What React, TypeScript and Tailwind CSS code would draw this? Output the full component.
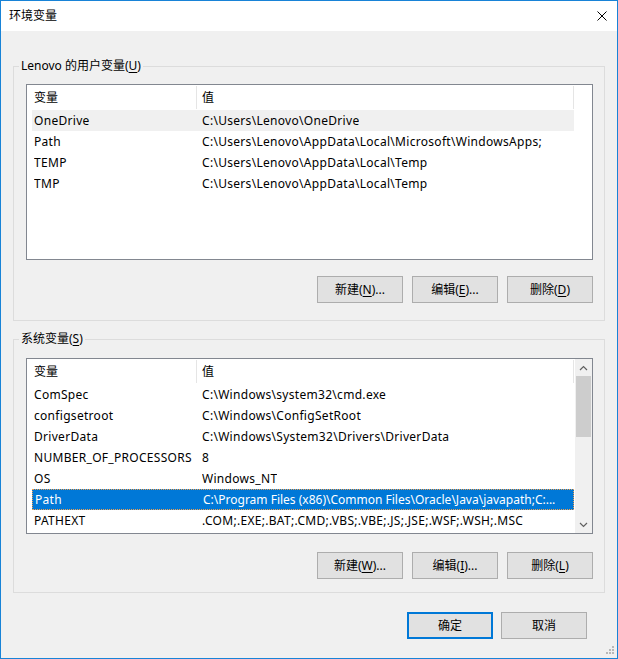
import type { ReactNode } from "react";

const userVars = [
  ["OneDrive", "C:\\Users\\Lenovo\\OneDrive"],
  ["Path", "C:\\Users\\Lenovo\\AppData\\Local\\Microsoft\\WindowsApps;"],
  ["TEMP", "C:\\Users\\Lenovo\\AppData\\Local\\Temp"],
  ["TMP", "C:\\Users\\Lenovo\\AppData\\Local\\Temp"],
];

const sysVars = [
  ["ComSpec", "C:\\Windows\\system32\\cmd.exe"],
  ["configsetroot", "C:\\Windows\\ConfigSetRoot"],
  ["DriverData", "C:\\Windows\\System32\\Drivers\\DriverData"],
  ["NUMBER_OF_PROCESSORS", "8"],
  ["OS", "Windows_NT"],
  ["Path", "C:\\Program Files (x86)\\Common Files\\Oracle\\Java\\javapath;C:..."],
  ["PATHEXT", ".COM;.EXE;.BAT;.CMD;.VBS;.VBE;.JS;.JSE;.WSF;.WSH;.MSC"],
];

// text with an underlined access key, e.g. 新建(N)...
function Mnemonic({ pre, k, post }: { pre: string; k: string; post: string }) {
  return (
    <span>
      {pre}
      <span className="underline underline-offset-[2px]">{k}</span>
      {post}
    </span>
  );
}

function Btn({ children, primary }: { children: ReactNode; primary?: boolean }) {
  return (
    <button
      className={
        primary
          ? "h-[27px] w-[86px] bg-[#e1e1e1] border-2 border-[#0078d7] flex items-center justify-center text-[12px] text-black"
          : "h-[27px] w-[86px] bg-[#e1e1e1] border border-[#adadad] flex items-center justify-center text-[12px] text-black"
      }
    >
      {children}
    </button>
  );
}

function ListHeader() {
  return (
    <div className="h-[25px] flex shrink-0 bg-white">
      <div className="w-[170px] pl-[7px] flex items-center border-r border-[#e5e5e5] my-[1px]">变量</div>
      <div className="w-[377px] pl-[5px] flex items-center border-r border-[#e5e5e5] my-[1px]">值</div>
      <div className="flex-1" />
    </div>
  );
}

function Row({ name, value, state }: { name: string; value: string; state?: "hover" | "selected" }) {
  let cls = "h-[21px] ml-[5px] w-[542px] flex items-center pl-[2px] whitespace-nowrap overflow-hidden";
  if (state === "hover") cls += " bg-[#f0f0f0]";
  if (state === "selected") cls += " bg-[#0078d7] text-white border border-dotted border-[#f0a050] pl-[1px]";
  return (
    <div className={cls}>
      <div className="w-[168px] shrink-0 overflow-hidden tracking-[0.3px]">{name}</div>
      {/* the truncated Path value is already cut to fit */}
      <div className={state === "selected" ? "overflow-hidden" : "overflow-hidden tracking-[0.3px]"}>{value}</div>
    </div>
  );
}

function Chevron({ up }: { up?: boolean }) {
  return (
    <svg width="9" height="6" viewBox="0 0 9 6">
      <path d={up ? "M1 5 L4.5 1.5 L8 5" : "M1 1 L4.5 4.5 L8 1"} fill="none" stroke="#606060" strokeWidth="1.2" />
    </svg>
  );
}

export default function App() {
  return (
    <div className="w-[618px] h-[659px] bg-[#f0f0f0] border border-[#1883d7] flex flex-col relative text-[12px] text-black font-['Noto_Sans','Noto_Sans_CJK_SC',sans-serif] overflow-hidden">
      {/* Title bar */}
      <div className="h-[30px] bg-white flex items-center justify-between pl-[8px] pr-[10px] shrink-0">
        <span>环境变量</span>
        <svg width="10" height="10" viewBox="0 0 10 10">
          <path d="M0.5 0.5 L9.5 9.5 M9.5 0.5 L0.5 9.5" stroke="#000" strokeWidth="1" />
        </svg>
      </div>

      <div className="px-[12px]">
        {/* User variables */}
        <fieldset className="mt-[27px] border border-[#dcdcdc] pl-[12px] pr-[11px] pt-[10px] pb-[17px]">
          <legend className="-ml-[7px] px-[2px] leading-[16px]">
            <Mnemonic pre="Lenovo 的用户变量(" k="U" post=")" />
          </legend>
          <div className="h-[176px] w-[567px] border border-[#828790] bg-white flex flex-col overflow-hidden">
            <ListHeader />
            {userVars.map(([n, v], i) => (
              <Row key={n} name={n} value={v} state={i === 0 ? "hover" : undefined} />
            ))}
          </div>
          <div className="mt-[16px] flex justify-end gap-[9px]">
            <Btn><Mnemonic pre="新建(" k="N" post=")..." /></Btn>
            <Btn><Mnemonic pre="编辑(" k="E" post=")..." /></Btn>
            <Btn><Mnemonic pre="删除(" k="D" post=")" /></Btn>
          </div>
        </fieldset>

        {/* System variables */}
        <fieldset className="mt-[10px] border border-[#dcdcdc] pl-[12px] pr-[11px] pt-[11px] pb-[13px]">
          <legend className="-ml-[7px] px-[2px] leading-[16px]">
            <Mnemonic pre="系统变量(" k="S" post=")" />
          </legend>
          <div className="h-[176px] w-[567px] border border-[#828790] bg-white flex overflow-hidden">
            <div className="flex-1 flex flex-col overflow-hidden">
              <ListHeader />
              {sysVars.map(([n, v]) => (
                <Row key={n} name={n} value={v} state={n === "Path" ? "selected" : undefined} />
              ))}
            </div>
            <div className="w-[17px] shrink-0 bg-[#f0f0f0] flex flex-col items-center">
              <div className="h-[17px] w-full flex items-center justify-center">
                <Chevron up />
              </div>
              <div className="h-[61px] w-[15px] bg-[#cdcdcd]" />
              <div className="flex-1" />
              <div className="h-[17px] w-full flex items-center justify-center">
                <Chevron />
              </div>
            </div>
          </div>
          <div className="mt-[18px] flex justify-end gap-[9px]">
            <Btn><Mnemonic pre="新建(" k="W" post=")..." /></Btn>
            <Btn><Mnemonic pre="编辑(" k="I" post=")..." /></Btn>
            <Btn><Mnemonic pre="删除(" k="L" post=")" /></Btn>
          </div>
        </fieldset>
      </div>

      {/* OK / Cancel */}
      <div className="mt-[19px] flex justify-end gap-[8px] pr-[30px]">
        <Btn primary>确定</Btn>
        <Btn>取消</Btn>
      </div>

      {/* resize grip */}
      <svg className="absolute right-[2px] bottom-[3px]" width="9" height="9" viewBox="0 0 9 9">
        <rect x="6" y="0" width="2" height="2" fill="#b8b8b8" />
        <rect x="3" y="3" width="2" height="2" fill="#b8b8b8" />
        <rect x="6" y="3" width="2" height="2" fill="#b8b8b8" />
        <rect x="0" y="6" width="2" height="2" fill="#b8b8b8" />
        <rect x="3" y="6" width="2" height="2" fill="#b8b8b8" />
        <rect x="6" y="6" width="2" height="2" fill="#b8b8b8" />
      </svg>
    </div>
  );
}
